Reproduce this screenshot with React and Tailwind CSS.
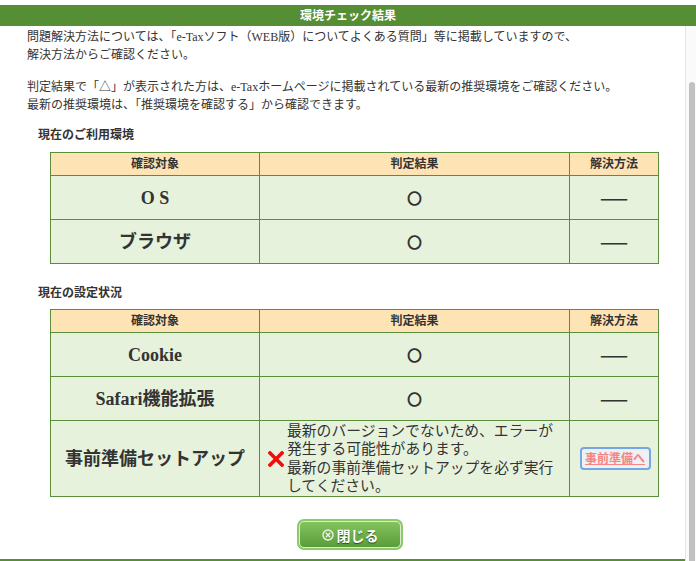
const serif = "font-['Liberation_Serif','Noto_Sans_CJK_JP',serif]";

function Dash() {
  return <span className="text-[31px] font-bold leading-none text-[#333] font-['Noto_Sans_CJK_JP',sans-serif]">―</span>;
}

function Circle() {
  return <span className="text-[15px] font-bold leading-none text-[#333] font-['Noto_Sans_CJK_JP',sans-serif]">〇</span>;
}

function HeaderRow() {
  return (
    <div className="grid h-[23px] grid-cols-[209px_310px_88px] border-b border-[#5a8e3a] bg-[#fee3b5] text-[12px] font-bold text-[#333]">
      <div className="flex items-center justify-center border-r border-[#5a8e3a]">確認対象</div>
      <div className="flex items-center justify-center border-r border-[#5a8e3a]">判定結果</div>
      <div className="flex items-center justify-center">解決方法</div>
    </div>
  );
}

function Row({ name, result, action, last, height = "h-[44px]", resultAlign = "justify-center" }) {
  return (
    <div
      className={`grid grid-cols-[209px_310px_88px] bg-[#e7f2dc] text-[#333] ${height} ${last ? "" : "border-b border-[#5a8e3a]"}`}
    >
      <div className="flex items-center justify-center border-r border-[#5a8e3a] text-[18px] font-bold">{name}</div>
      <div className={`flex items-center border-r border-[#5a8e3a] ${resultAlign}`}>{result}</div>
      <div className="flex items-center justify-center">{action}</div>
    </div>
  );
}

function CrossMark() {
  return (
    <svg width="16" height="16" viewBox="0 0 16 16" className="shrink-0">
      <path d="M2 2 L14 14 M14 2 L2 14" stroke="#f20d0d" strokeWidth="3.6" strokeLinecap="square" />
    </svg>
  );
}

function SetupResult() {
  return (
    <div className="flex items-center pl-[8px]">
      <CrossMark />
      <div className="ml-[3px] text-[14.8px] leading-[18.5px] text-[#333]">
        最新のバージョンでないため、エラーが
        <br />
        発生する可能性があります。
        <br />
        最新の事前準備セットアップを必ず実行
        <br />
        してください。
      </div>
    </div>
  );
}

function SetupLink() {
  return (
    <div className="ml-[2px] flex h-[23px] w-[71px] items-center justify-center rounded-[4px] border-2 border-[#75a6e6] bg-[#eef1f4]">
      <span className="text-[12px] font-bold text-[#f58585] underline">事前準備へ</span>
    </div>
  );
}

function CloseButton() {
  return (
    <button className="h-[31px] w-[106px] rounded-[7px] bg-[#8dc96b] p-[2px]">
      <div className="flex h-full w-full items-center justify-center gap-[3px] rounded-[5px] border border-[#d9eccb] bg-linear-to-b from-[#84c45d] to-[#5b9c39]">
        <svg width="12" height="12" viewBox="0 0 12 12">
          <circle cx="6" cy="6" r="5" fill="none" stroke="#eef3ea" strokeWidth="1.4" />
          <path d="M3.8 3.8 L8.2 8.2 M8.2 3.8 L3.8 8.2" stroke="#eef3ea" strokeWidth="1.4" />
        </svg>
        <span className="text-[14px] font-bold text-white [text-shadow:0_1px_1px_rgba(0,0,0,0.55)] font-['Noto_Sans_CJK_JP',sans-serif]">
          閉じる
        </span>
      </div>
    </button>
  );
}

export default function App() {
  return (
    <div className={`h-[561px] w-[696px] overflow-hidden bg-white ${serif}`}>
      <div className="h-[5px] bg-white" />
      <div className="flex h-[21px] items-center justify-center bg-[#568e35] text-[12px] font-bold text-white">
        環境チェック結果
      </div>
      <div className="flex h-[535px]">
        <div className="flex w-[685px] flex-col">
          <div className="flex-1 pl-[27px] pt-[2px] text-[12px] leading-[18px] text-[#333]">
            <p>
              問題解決方法については、「e-Taxソフト（WEB版）についてよくある質問」等に掲載していますので、
              <br />
              解決方法からご確認ください。
            </p>
            <p className="mt-[14px]">
              判定結果で「△」が表示された方は、e-Taxホームページに掲載されている最新の推奨環境をご確認ください。
              <br />
              最新の推奨環境は、「推奨環境を確認する」から確認できます。
            </p>

            <h2 className="ml-[11px] mt-[12px] font-bold">現在のご利用環境</h2>
            <div className="ml-[23px] mt-[8px] w-[609px] border border-[#5a8e3a]">
              <HeaderRow />
              <Row name="O S" result={<Circle />} action={<Dash />} />
              <Row name="ブラウザ" result={<Circle />} action={<Dash />} last height="h-[43px]" />
            </div>

            <h2 className="ml-[11px] mt-[20px] font-bold">現在の設定状況</h2>
            <div className="ml-[23px] mt-[7px] w-[609px] border border-[#5a8e3a]">
              <HeaderRow />
              <Row name="Cookie" result={<Circle />} action={<Dash />} />
              <Row name="Safari機能拡張" result={<Circle />} action={<Dash />} />
              <Row
                name="事前準備セットアップ"
                result={<SetupResult />}
                action={<SetupLink />}
                last
                height="h-[75px]"
                resultAlign="justify-start"
              />
            </div>

            <div className="mt-[22px] flex justify-center pl-[15px] pr-[27px]">
              <CloseButton />
            </div>
          </div>
          <div className="h-[2px] bg-[#568e35]" />
        </div>
        <div className="flex w-[11px] border-l border-[#e6e6e6] bg-[#fafafa] pt-[56px] pl-[3px] pr-[1px]">
          <div className="w-full rounded-t-[4px] bg-[#c1c1c1]" />
        </div>
      </div>
    </div>
  );
}
